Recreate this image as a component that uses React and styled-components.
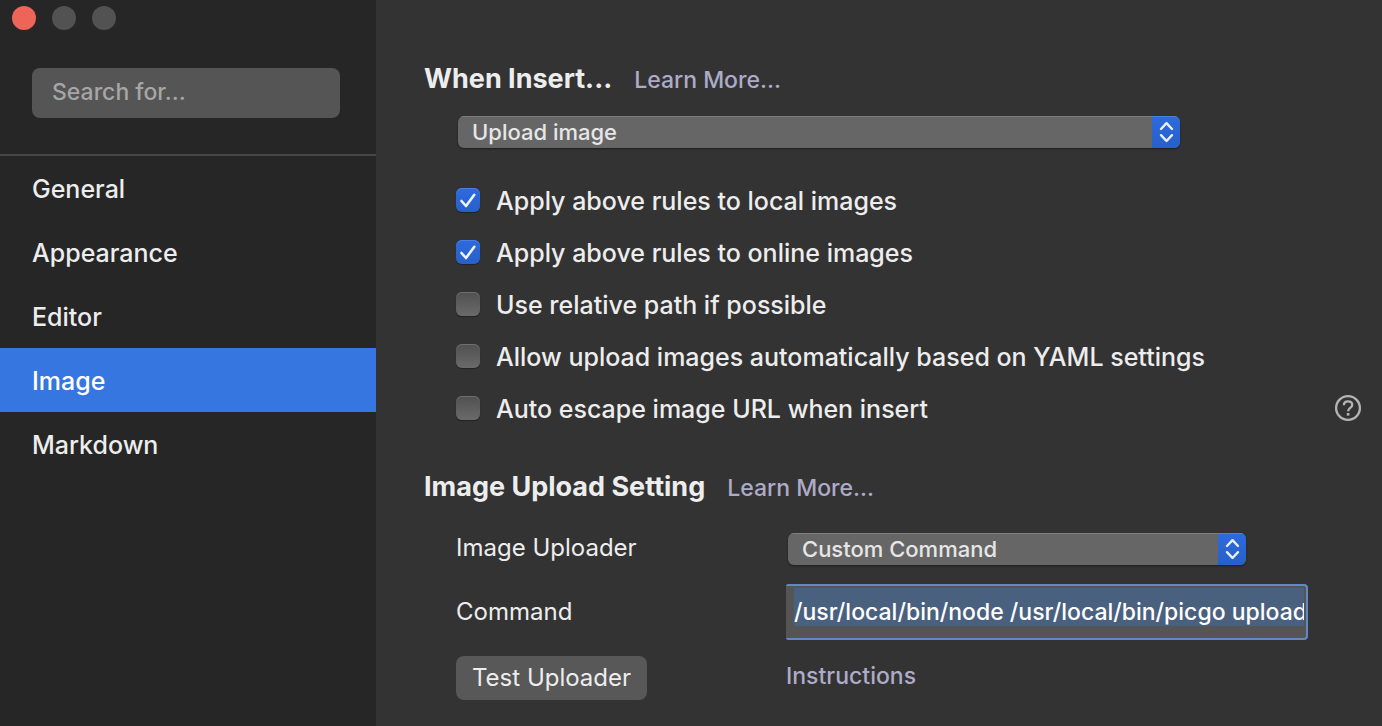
import React from "react";
import styled, { createGlobalStyle } from "styled-components";

const GlobalStyle = createGlobalStyle`
  *, *::before, *::after { box-sizing: border-box; }
  body {
    margin: 0;
    background: #333333;
    color: #ededed;
    font-family: Inter, "Liberation Sans", sans-serif;
    font-size: 25px;
    font-weight: 500;
    line-height: 36px;
    -webkit-font-smoothing: antialiased;
  }
  button, input, select { font: inherit; color: inherit; }
`;

const Window = styled.div`
  display: flex;
  min-height: 100vh;
`;

const Sidebar = styled.aside`
  flex: none;
  width: 376px;
  background: #262626;
`;

const TrafficLights = styled.div`
  display: flex;
  gap: 16px;
  padding: 6px 12px 0;
`;

const Light = styled.button`
  width: 24px;
  height: 24px;
  padding: 0;
  border: 0;
  border-radius: 50%;
  background: ${(p) => p.$color};
`;

const SearchArea = styled.div`
  padding: 38px 36px 36px 32px;
  border-bottom: 2px solid #474747;
`;

const SearchInput = styled.input`
  display: block;
  width: 100%;
  height: 50px;
  padding: 0 20px 2px;
  border: 0;
  border-radius: 8px;
  background: #555555;
  font-size: 23px;
  outline: none;
  &::placeholder { color: #a6a6a6; opacity: 1; }
`;

const NavItem = styled.a`
  display: block;
  padding: 2px 32px 0;
  line-height: 62px;
  color: ${(p) => (p.$active ? "#ffffff" : "#ededed")};
  background: ${(p) => (p.$active ? "#3676e0" : "transparent")};
  text-decoration: none;
`;

const Main = styled.main`
  flex: 1;
  min-width: 0;
  padding: 61px 20px 18px 48px;
`;

const SectionHead = styled.div`
  display: flex;
  align-items: baseline;
  gap: 22px;
`;

const Heading = styled.h2`
  margin: 0;
  font-size: 27px;
  font-weight: 700;
`;

const TextLink = styled.a`
  font-size: 23px;
  color: #aeabc8;
  text-decoration: none;
`;

const InsertSection = styled.section`
  margin-bottom: 35px;
`;

const InsertBody = styled.div`
  padding: 16px 0 0 32px;
`;

const SelectWrap = styled.div`
  display: flex;
  width: 100%;
  max-width: ${(p) => p.$max}px;
  height: 32px;
  margin: 2px 0 0 2px;
  border-radius: 6px;
  overflow: hidden;
  position: relative;
  background: #666666;
  box-shadow: 0 1px 2px rgba(0, 0, 0, 0.45);
`;

const NativeSelect = styled.select`
  flex: 1;
  appearance: none;
  padding: 0 40px 0 14px;
  border: 0;
  border-top: 1px solid #808080;
  background: transparent;
  font-size: 22px;
  line-height: 31px;
  color: #e6e6e6;
  outline: none;
`;

const Stepper = styled.span`
  position: absolute;
  top: 0;
  right: 0;
  width: 28px;
  height: 32px;
  border-top: 1px solid #4a80e0;
  background: linear-gradient(#2e6ade, #2760c9);
  pointer-events: none;
  svg { display: block; }
`;

const Rules = styled.div`
  margin-top: 26px;
`;

const RuleRow = styled.div`
  display: flex;
  align-items: center;
  justify-content: space-between;
  height: 52px;
`;

const CheckLabel = styled.label`
  display: flex;
  align-items: center;
  gap: 16px;
`;

const CheckFrame = styled.span`
  display: grid;
  width: 24px;
  height: 24px;
  & > * { grid-area: 1 / 1; }
  svg { pointer-events: none; display: none; }
  input:checked + svg { display: block; }
`;

const CheckBox = styled.input`
  appearance: none;
  width: 24px;
  height: 24px;
  margin: 0;
  border-radius: 6px;
  background: linear-gradient(#505050, #6a6a6a);
  box-shadow: inset 0 1px 0 #6e6e6e, 0 1px 1px rgba(0, 0, 0, 0.35);
  &:checked {
    background: linear-gradient(#2e6ade, #2760c9);
    box-shadow: inset 0 1px 0 #4a80e0, 0 1px 1px rgba(0, 0, 0, 0.35);
  }
`;

const RuleText = styled.span`
  padding-top: 2px;
`;

const HelpButton = styled.button`
  display: block;
  width: 28px;
  height: 28px;
  padding: 0;
  border: 0;
  background: none;
  svg { display: block; }
`;

const Fields = styled.div`
  padding: 10px 0 0 32px;
`;

const FieldRow = styled.div`
  display: grid;
  grid-template-columns: 330px minmax(0, 1fr);
  align-items: center;
  height: 64px;
`;

const ActionRow = styled(FieldRow)`
  align-items: start;
  padding-top: 12px;
`;

const FieldLabel = styled.label`
  font-size: 24px;
  font-weight: 400;
`;

const CommandInput = styled.input`
  width: 100%;
  max-width: 522px;
  height: 56px;
  padding: 0 2px 0 8px;
  border: 2px solid #6289c4;
  border-left: 0;
  border-radius: 2px 4px 4px 2px;
  background:
    linear-gradient(#4a607f, #4a607f) 8px 2px / calc(100% - 10px) 38px no-repeat,
    #555555;
  font-size: 23px;
  color: #ffffff;
  outline: none;
`;

const PushButton = styled.button`
  justify-self: start;
  height: 44px;
  padding: 0 16px;
  border: 0;
  border-radius: 8px;
  background: #585858;
  font-size: 24px;
  font-weight: 400;
`;

const ActionLink = styled(TextLink)`
  justify-self: start;
  line-height: 40px;
`;

const navItems = ["General", "Appearance", "Editor", "Image", "Markdown"];

const rules = [
  { label: "Apply above rules to local images", checked: true },
  { label: "Apply above rules to online images", checked: true },
  { label: "Use relative path if possible" },
  { label: "Allow upload images automatically based on YAML settings" },
  { label: "Auto escape image URL when insert", help: true },
];

function PopUp({ id, label, options, max }) {
  return (
    <SelectWrap $max={max}>
      <NativeSelect id={id} aria-label={label}>
        {options.map((o) => (
          <option key={o}>{o}</option>
        ))}
      </NativeSelect>
      <Stepper>
        <svg width="28" height="30" viewBox="0 0 28 30" fill="none" stroke="#e8effc" strokeWidth="2.4" strokeLinecap="round" strokeLinejoin="round">
          <path d="M9 12L14.5 6.2L20 12M9 18.2L14.5 24L20 18.2" />
        </svg>
      </Stepper>
    </SelectWrap>
  );
}

function Rule({ label, checked, help }) {
  return (
    <RuleRow>
      <CheckLabel>
        <CheckFrame>
          <CheckBox type="checkbox" defaultChecked={checked} />
          <svg width="24" height="24" viewBox="0 0 24 24" fill="none" stroke="#edf2fd" strokeWidth="2.6" strokeLinecap="round" strokeLinejoin="round">
            <path d="M5.5 13L10 18L18.3 6.8" />
          </svg>
        </CheckFrame>
        <RuleText>{label}</RuleText>
      </CheckLabel>
      {help && (
        <HelpButton aria-label="Help">
          <svg width="28" height="28" viewBox="0 0 28 28" fill="none" stroke="#b5b5b5">
            <circle cx="14" cy="14" r="11.9" strokeWidth="2.3" />
            <path d="M9.9 11.2C9.9 8.8 11.6 7.4 14 7.4C16.5 7.4 18.2 8.8 18.2 10.9C18.2 13.8 14.1 14 14.1 17.3" strokeWidth="2.3" />
            <rect x="12.8" y="19" width="2.6" height="2.6" fill="#b5b5b5" stroke="none" />
          </svg>
        </HelpButton>
      )}
    </RuleRow>
  );
}

export default function App() {
  return (
    <Window>
      <GlobalStyle />
      <Sidebar>
        <TrafficLights>
          <Light $color="#ed6559" aria-label="Close" />
          <Light $color="#525252" aria-label="Minimize" />
          <Light $color="#525252" aria-label="Zoom" />
        </TrafficLights>
        <SearchArea>
          <SearchInput type="text" placeholder="Search for..." aria-label="Search" />
        </SearchArea>
        <nav>
          {navItems.map((item) => (
            <NavItem key={item} href="#" $active={item === "Image"}>
              {item}
            </NavItem>
          ))}
        </nav>
      </Sidebar>
      <Main>
        <InsertSection>
          <SectionHead>
            <Heading>When Insert...</Heading>
            <TextLink href="#">Learn More...</TextLink>
          </SectionHead>
          <InsertBody>
            <PopUp label="When Insert" options={["Upload image"]} max={722} />
            <Rules>
              {rules.map((rule) => (
                <Rule key={rule.label} {...rule} />
              ))}
            </Rules>
          </InsertBody>
        </InsertSection>
        <section>
          <SectionHead>
            <Heading>Image Upload Setting</Heading>
            <TextLink href="#">Learn More...</TextLink>
          </SectionHead>
          <Fields>
            <FieldRow>
              <FieldLabel htmlFor="uploader">Image Uploader</FieldLabel>
              <PopUp id="uploader" options={["Custom Command"]} max={458} />
            </FieldRow>
            <FieldRow>
              <FieldLabel htmlFor="command">Command</FieldLabel>
              <CommandInput id="command" type="text" spellCheck={false} defaultValue="/usr/local/bin/node /usr/local/bin/picgo upload" />
            </FieldRow>
            <ActionRow>
              <PushButton>Test Uploader</PushButton>
              <ActionLink href="#">Instructions</ActionLink>
            </ActionRow>
          </Fields>
        </section>
      </Main>
    </Window>
  );
}
